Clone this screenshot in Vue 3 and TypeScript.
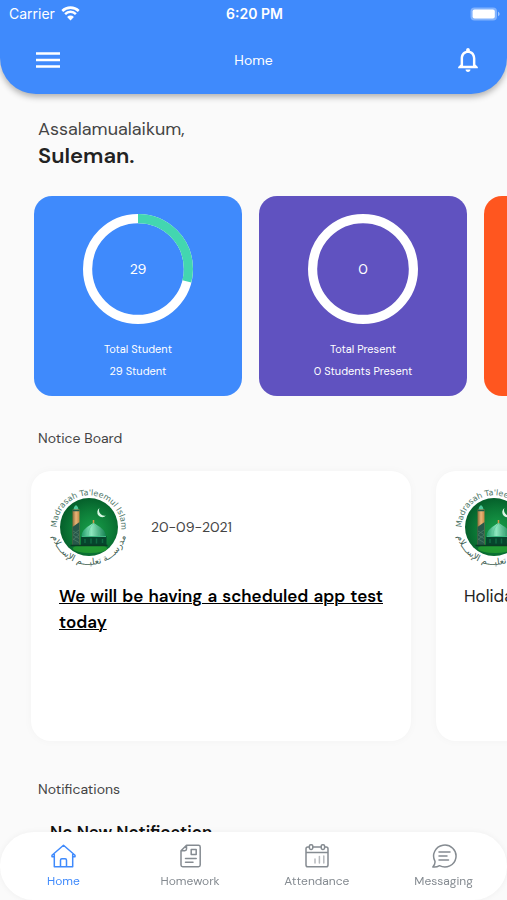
<script setup lang="ts">
interface Stat {
  id: string
  value: number | null
  percent: number
  title: string
  detail: string
  tone: string
}

interface Notice {
  id: string
  date: string
  text: string
  important: boolean
}

interface Tab {
  id: string
  label: string
}

const stats: Stat[] = [
  { id: 'total', value: 29, percent: 29, title: 'Total Student', detail: '29 Student', tone: 'blue' },
  { id: 'present', value: 0, percent: 0, title: 'Total Present', detail: '0 Students Present', tone: 'purple' },
  { id: 'next', value: null, percent: 0, title: '', detail: '', tone: 'orange' },
]

const notices: Notice[] = [
  { id: 'n1', date: '20-09-2021', text: 'We will be having a scheduled app test today', important: true },
  { id: 'n2', date: '', text: 'Holiday', important: false },
]

const tabs: Tab[] = [
  { id: 'home', label: 'Home' },
  { id: 'homework', label: 'Homework' },
  { id: 'attendance', label: 'Attendance' },
  { id: 'messaging', label: 'Messaging' },
]
const activeTab = 'home'
</script>

<template>
  <div class="page">
    <header class="top">
      <div class="status">
        <span class="carrier">
          Carrier
          <svg class="wifi" viewBox="0 0 18 14" aria-hidden="true">
            <path d="M1.200 4.600a11.200 11.200 0 0 1 15.600 0" />
            <path d="M3.900 7.500a7.200 7.200 0 0 1 10.200 0" />
            <path class="solid" d="M9 13.600 5.800 10.300a4.600 4.600 0 0 1 6.400 0Z" />
          </svg>
        </span>
        <span class="clock">6:20 PM</span>
        <svg class="battery" viewBox="0 0 30 14" aria-hidden="true">
          <rect x="0.500" y="0.500" width="26.500" height="13" rx="4" fill="#fff" fill-opacity=".35" />
          <rect x="2.600" y="2.400" width="22.200" height="9.200" rx="2" fill="#fff" />
          <path d="M28 4.800c1.100.4 1.600 1.200 1.600 2.200s-.5 1.800-1.600 2.200z" fill="#fff" fill-opacity=".5" />
        </svg>
      </div>
      <div class="bar">
        <button class="icon-button menu" type="button" aria-label="Menu">
          <svg class="menu-icon" viewBox="0 0 24 18" aria-hidden="true">
            <path d="M0 2.500h24M0 9h24M0 15.500h24" />
          </svg>
        </button>
        <h1 class="title">Home</h1>
        <button class="icon-button alerts" type="button" aria-label="Alerts">
          <svg class="bell" viewBox="4 2.500 16 19.500" aria-hidden="true">
            <path d="M12 22c1.100 0 2-.9 2-2h-4c0 1.100.9 2 2 2zm6-6v-5c0-3.070-1.630-5.640-4.500-6.320V4c0-.83-.67-1.500-1.500-1.500s-1.500.67-1.500 1.500v.68C7.640 5.360 6 7.920 6 11v5l-2 2v1h16v-1l-2-2zm-2 1H8v-6c0-2.480 1.510-4.500 4-4.500s4 2.020 4 4.500v6z" />
          </svg>
        </button>
      </div>
    </header>

    <main class="content">
      <div class="greeting">
        <p class="salam">Assalamualaikum,</p>
        <p class="name">Suleman.</p>
      </div>

      <section class="stats">
        <article v-for="s in stats" :key="s.id" class="stat" :class="s.tone">
          <template v-if="s.value !== null">
            <div class="ring">
              <svg viewBox="0 0 110 110" aria-hidden="true">
                <circle class="track" cx="55" cy="55" r="50.400" />
                <circle
                  v-if="s.percent > 0"
                  class="progress"
                  cx="55"
                  cy="55"
                  r="50.400"
                  pathLength="100"
                  :stroke-dasharray="`${s.percent} 100`"
                  transform="rotate(-90 55 55)"
                />
              </svg>
              <span class="value">{{ s.value }}</span>
            </div>
            <p class="stat-text">{{ s.title }}</p>
            <p class="stat-text">{{ s.detail }}</p>
          </template>
        </article>
      </section>

      <h2 class="heading">Notice Board</h2>
      <section class="notices">
        <article v-for="n in notices" :key="n.id" class="notice">
          <div class="notice-head">
            <svg class="crest" viewBox="0 0 160 160" aria-hidden="true">
              <defs>
                <radialGradient :id="`disc-${n.id}`" cx=".55" cy=".55" r=".55">
                  <stop offset="0" stop-color="#18a04a" />
                  <stop offset=".6" stop-color="#0d7c38" />
                  <stop offset="1" stop-color="#05602b" />
                </radialGradient>
                <linearGradient :id="`dome-${n.id}`" x1="0" x2="1" y1="0" y2="0">
                  <stop offset="0" stop-color="#1f9c68" />
                  <stop offset=".4" stop-color="#8fe8bf" />
                  <stop offset="1" stop-color="#138150" />
                </linearGradient>
                <linearGradient :id="`tower-${n.id}`" x1="0" x2="1" y1="0" y2="0">
                  <stop offset="0" stop-color="#8d6a3a" />
                  <stop offset=".5" stop-color="#e9b678" />
                  <stop offset="1" stop-color="#c48745" />
                </linearGradient>
                <path :id="`upper-${n.id}`" d="M15.500 81a64.500 64.500 0 0 1 129 0v16" />
                <path :id="`lower-${n.id}`" d="M4 76v4a76 76 0 0 0 152 0v-4" />
              </defs>
              <circle cx="80" cy="80" r="58" :fill="`url(#disc-${n.id})`" />
              <ellipse cx="82" cy="123" rx="34" ry="9" fill="#35b52f" opacity=".55" />
              <path d="M101 42a10 10 0 1 0 13 15 11 11 0 0 1-13-15z" fill="#d9f7e4" />
              <path d="M49 45q0-6 5-9 5 3 5 9z" fill="#4fc79a" />
              <rect x="47" y="45" width="14" height="71" :fill="`url(#tower-${n.id})`" />
              <path d="M47 80l14-10v46H47z" fill="#28584a" />
              <path d="M48 88l12 7M48 96l12 7M48 104l12 7M60 86l-12 9M60 96l-12 9" stroke="#4d7f68" stroke-width="1.500" />
              <path d="M47 47h14" stroke="#1c5d49" stroke-width="3" />
              <path d="M89 66v8" stroke="#d39a4a" stroke-width="3" />
              <path d="M65 99c0-13 12-20 24-27 12 7 25 14 25 27z" :fill="`url(#dome-${n.id})`" />
              <path d="M78 98c0-12 5-20 11-25 6 5 12 13 12 25" fill="none" stroke="#4fbf8e" stroke-width="1" />
              <rect x="64" y="98" width="51" height="18" fill="#06452c" />
              <path d="M65 99h49" stroke="#3dba83" stroke-width="2" />
              <path d="M72 104v8M84 103v10M95 103v10M107 104v8" stroke="#0f6a42" stroke-width="3" />
              <path d="M43 117h74" stroke="#0b3b24" stroke-width="3" />
              <text class="crest-latin">
                <textPath :href="`#upper-${n.id}`" startOffset="0">Madrasah Ta'leemul Islam</textPath>
              </text>
              <text class="crest-arabic">
                <textPath :href="`#lower-${n.id}`" startOffset="50%">مدرســـة   تعليـــم   الإســـلام</textPath>
              </text>
            </svg>
            <time v-if="n.date" class="date">{{ n.date }}</time>
          </div>
          <p class="notice-text" :class="{ important: n.important }">{{ n.text }}</p>
        </article>
      </section>

      <h2 class="heading">Notifications</h2>
      <p class="empty">No New Notification</p>
    </main>

    <nav class="tabs">
      <a v-for="t in tabs" :key="t.id" href="#" class="tab" :class="{ active: t.id === activeTab }">
        <svg class="tab-icon" viewBox="0 0 26 26" aria-hidden="true">
          <template v-if="t.id === 'home'">
            <path d="M2 12.200 13.500 2.200l11.500 10v1.600h-2.300M2 12.200v1.600h2.300M4.300 11.500v12.300h18.400V11.500M10.500 23.600v-6.400q0-1.400 1.400-1.400h3.200q1.400 0 1.400 1.400v6.400" />
          </template>
          <template v-else-if="t.id === 'homework'">
            <path d="M9.500 2.200h12q1.700 0 1.700 1.700v18.200q0 1.700-1.700 1.700H5.700Q4 23.800 4 22.100V7.700zM9.500 2.400v3.600q0 1.700-1.700 1.700H4.200M14.200 6.500h5v5h-5zM8.500 15.400h10.700M8.500 19.300h7.500" />
          </template>
          <template v-else-if="t.id === 'attendance'">
            <path d="M5.200 3.900H3.800q-1.800 0-1.800 1.800v16.300q0 1.800 1.800 1.800h18.400q1.800 0 1.800-1.800V5.700q0-1.800-1.800-1.800h-1.400M9 3.900h8M2 9.600h22" />
            <rect x="5.400" y="1.700" width="3.400" height="4.800" rx="1.400" />
            <rect x="17.200" y="1.700" width="3.400" height="4.800" rx="1.400" />
            <path class="faint" d="M11 16v4M15.400 13.500v6.500M19.800 13v7" />
          </template>
          <template v-else>
            <path d="M4 18.300A11.200 11 0 1 1 8.500 22.700Q5.500 24.500 1.800 24q2.500-2.500 2.200-5.700zM8 9h11M8 13h8M8 17h9.500" />
          </template>
        </svg>
        <span>{{ t.label }}</span>
      </a>
    </nav>
  </div>
</template>

<style>
body {
  margin: 0;
  background: #fafafa;
}
</style>

<style scoped>
.page {
  height: 100vh;
  overflow: hidden;
  background: #fafafa;
  color: #333;
  font-family: "DM Sans", Inter, "Liberation Sans", sans-serif;
}

p,
h1,
h2 {
  margin: 0;
}

.top {
  box-sizing: border-box;
  height: 94px;
  background: #3f8afc;
  color: #fff;
  border-radius: 0 0 36px 36px;
  box-shadow: 0 3px 6px rgba(0, 0, 0, 0.3);
}

.status {
  display: grid;
  grid-template-columns: 1fr auto 1fr;
  align-items: center;
  height: 27px;
  padding: 0 7px 0 9px;
  font-family: Inter, sans-serif;
  font-size: 14px;
}

.carrier {
  display: flex;
  align-items: center;
  gap: 6px;
}

.wifi {
  width: 19px;
  height: 15px;
  fill: none;
  stroke: #fff;
  stroke-width: 2.4;
}

.wifi .solid {
  fill: #fff;
  stroke: none;
}

.clock {
  font-weight: 600;
}

.battery {
  width: 30px;
  height: 14px;
  justify-self: end;
}

.bar {
  display: grid;
  grid-template-columns: 1fr auto 1fr;
  align-items: center;
  height: 65px;
  padding: 0 29px;
}

.icon-button {
  display: flex;
  padding: 0;
  border: 0;
  background: none;
}

.menu {
  justify-self: start;
  padding-left: 7px;
}

.alerts {
  justify-self: end;
}

.menu-icon {
  width: 24px;
  height: 18px;
  stroke: #fff;
  stroke-width: 2.6;
}

.bell {
  width: 20px;
  height: 24px;
  fill: #fff;
}

.title {
  font-size: 14px;
  line-height: 20px;
  font-weight: 400;
}

.greeting {
  padding: 23px 38px 27px;
}

.salam {
  font-size: 18px;
  line-height: 25px;
  color: #444;
}

.name {
  font-size: 22px;
  line-height: 27px;
  font-weight: 600;
  color: #222;
}

.stats {
  display: flex;
  gap: 17px;
  padding-left: 34px;
  overflow: hidden;
}

.stat {
  box-sizing: border-box;
  flex: 0 0 208px;
  min-height: 200px;
  padding-top: 18px;
  border-radius: 18px;
  color: #fff;
  text-align: center;
}

.blue {
  background: #3f8afc;
}

.purple {
  background: #6052c0;
}

.orange {
  background: #ff561f;
}

.ring {
  display: grid;
  place-items: center;
  margin-bottom: 14px;
}

.ring > * {
  grid-area: 1 / 1;
}

.ring svg {
  width: 110px;
  height: 110px;
}

.track,
.progress {
  fill: none;
  stroke: #fff;
  stroke-width: 9.2;
}

.progress {
  stroke: #43d6b0;
}

.value {
  font-size: 14px;
}

.stat-text {
  font-size: 11px;
  line-height: 22px;
}

.heading {
  padding: 32px 38px 0;
  font-size: 14px;
  line-height: 20px;
  font-weight: 400;
  color: #444;
}

.notices {
  display: flex;
  gap: 25px;
  padding: 23px 0 6px 31px;
  overflow: hidden;
}

.notice {
  box-sizing: border-box;
  flex: 0 0 380px;
  min-height: 270px;
  padding: 16px 28px 0;
  border-radius: 20px;
  background: #fff;
  box-shadow: 0 0 10px rgba(0, 0, 0, 0.03);
}

.notice-head {
  display: flex;
  align-items: center;
  gap: 22px;
  margin-left: -10px;
}

.crest {
  width: 80px;
  height: 80px;
  overflow: visible;
}

.crest-latin {
  font-family: "DejaVu Sans", sans-serif;
  font-size: 16px;
  fill: #4c7466;
}

.crest-arabic {
  font-family: "DejaVu Sans", sans-serif;
  font-size: 18px;
  text-anchor: middle;
  white-space: pre;
  fill: #3f5f54;
}

.date {
  font-size: 14px;
  color: #444;
}

.notice-text {
  margin-top: 16px;
  font-size: 17px;
  line-height: 26px;
  color: #222;
  text-align: justify;
}

.important {
  font-weight: 600;
  color: #000;
  text-decoration: underline;
  text-decoration-thickness: 1px;
}

.empty {
  padding: 21px 50px 0;
  font-size: 17px;
  line-height: 24px;
  font-weight: 600;
  color: #111;
}

.tabs {
  position: fixed;
  right: 0;
  bottom: 0;
  left: 0;
  display: grid;
  grid-template-columns: repeat(4, 1fr);
  height: 68px;
  border-radius: 34px;
  background: #fff;
  box-shadow: 0 0 6px rgba(0, 0, 0, 0.05);
}

.tab {
  display: flex;
  flex-direction: column;
  align-items: center;
  gap: 4px;
  padding-top: 11px;
  font-size: 12px;
  line-height: 16px;
  color: #858b91;
  text-decoration: none;
}

.tab-icon {
  width: 26px;
  height: 26px;
  fill: none;
  stroke: currentColor;
  stroke-width: 1.5;
  stroke-linecap: round;
  stroke-linejoin: round;
}

.faint {
  opacity: 0.6;
}

.active {
  color: #3f8afc;
}
</style>
